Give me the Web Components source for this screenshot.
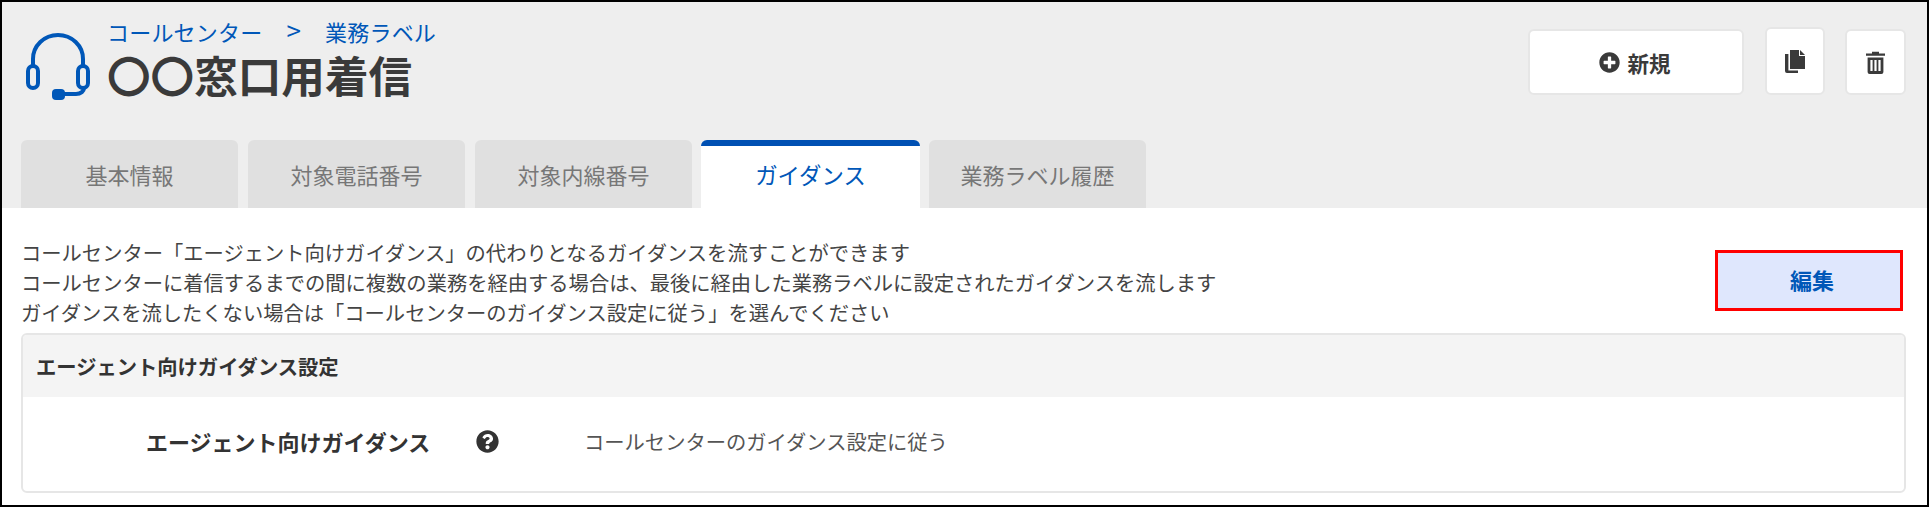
<!DOCTYPE html>
<html lang="ja">
<head>
<meta charset="utf-8">
<title>ガイダンス</title>
<style>
html,body{margin:0;padding:0;background:#fff}
body{font-family:"Noto Sans CJK JP","Noto Sans",sans-serif;color:#333}
</style>
</head>
<body>
<app-frame>
  <page-header slot="header" trail-a="コールセンター" trail-b="業務ラベル" heading="〇〇窓口用着信"></page-header>
  <tab-bar slot="header">
    <tab-item>基本情報</tab-item>
    <tab-item>対象電話番号</tab-item>
    <tab-item>対象内線番号</tab-item>
    <tab-item active>ガイダンス</tab-item>
    <tab-item>業務ラベル履歴</tab-item>
  </tab-bar>
  <guidance-intro>
    <div>コールセンター「エージェント向けガイダンス」の代わりとなるガイダンスを流すことができます</div>
    <div>コールセンターに着信するまでの間に複数の業務を経由する場合は、最後に経由した業務ラベルに設定されたガイダンスを流します</div>
    <div>ガイダンスを流したくない場合は「コールセンターのガイダンス設定に従う」を選んでください</div>
  </guidance-intro>
  <setting-card heading="エージェント向けガイダンス設定">
    <setting-row label="エージェント向けガイダンス">コールセンターのガイダンス設定に従う</setting-row>
  </setting-card>
</app-frame>
<script>
function def(name, html, init){
  customElements.define(name, class extends HTMLElement{
    constructor(){super();this.attachShadow({mode:'open'}).innerHTML=html;}
    connectedCallback(){ if(init) init(this, this.shadowRoot); }
  });
}
def('app-frame',`<style>
:host{display:flex;flex-direction:column;box-sizing:border-box;width:1929px;height:507px;border:2px solid #000;background:#fff;overflow:hidden}
.head{background:#eee;height:206px;display:flex;flex-direction:column;flex:none}
.body{flex:1;display:flex;flex-direction:column;padding:29px 21px 12px 19px;min-height:0}
</style><div class="head"><slot name="header"></slot></div><div class="body"><slot></slot></div>`);

def('page-header',`<style>
:host{display:flex;justify-content:space-between;height:138px;box-sizing:border-box;padding:0 21px 0 24px}
.left{display:flex;align-items:flex-start;gap:17px}
svg.hs{display:block;margin-top:31px;flex:none}
.txt{padding-top:14px}
.crumb{display:flex;gap:24px;font-size:22px;line-height:30px;color:#0057b8;letter-spacing:.2px}
.crumb .sep{font-size:26px;line-height:28px}
h1{margin:2px 0 0;font-size:43.6px;line-height:52px;font-weight:700;color:#3a3a3a}
.actions{display:flex;align-items:flex-end;height:93px;gap:21px}
.actions action-button:last-child{margin-left:-1px}
</style>
<div class="left">
<svg class="hs" width="64" height="67" viewBox="0 0 64 67" fill="none" stroke="#0057b8" stroke-width="4" aria-hidden="true">
<path d="M7 32V26a25 24 0 0 1 50 0v6"/>
<rect x="2" y="33" width="10" height="22" rx="5"/>
<rect x="52" y="33" width="10" height="22" rx="5"/>
<path d="M37 61H50c5 0 8-3 8-6"/>
<rect x="26" y="56" width="13" height="11" rx="4" fill="#0057b8" stroke="none"/>
</svg>
<div class="txt"><div class="crumb"><span id="a"></span><span class="sep">&gt;</span><span id="b"></span></div><h1 id="h"></h1></div>
</div>
<div class="actions">
<action-button wide><svg slot="icon" width="21" height="21" viewBox="0 0 512 512" fill="#3a3a3a"><path d="M256 8C119 8 8 119 8 256s111 248 248 248 248-111 248-248S393 8 256 8zm144 276c0 6.6-5.4 12-12 12h-92v92c0 6.6-5.4 12-12 12h-56c-6.6 0-12-5.4-12-12v-92h-92c-6.6 0-12-5.4-12-12v-56c0-6.6 5.4-12 12-12h92v-92c0-6.6 5.4-12 12-12h56c6.6 0 12 5.4 12 12v92h92c6.6 0 12 5.4 12 12v56z"/></svg>新規</action-button>
<action-button tall><svg slot="icon" width="20" height="23" viewBox="0 0 20 23" fill="#3a3a3a"><path d="M5 0h9v6h6v13H5z"/><path d="M15 0l5 5h-5z"/><path d="M0 4h3.4v16.4H13V23H2a2 2 0 0 1-2-2z"/></svg></action-button>
<action-button><svg slot="icon" width="19" height="23" viewBox="0 0 19 23" fill="#3a3a3a"><path d="M0 2.6h6V.8h7v1.8h6v2.2H0z"/><path fill-rule="evenodd" d="M1.6 6.4h15.8V21a2 2 0 0 1-2 2H3.6a2 2 0 0 1-2-2zM4.4 9v11h2.2V9zm4 0v11h2.2V9zm4 0v11h2.2V9z"/></svg></action-button>
</div>`,(el,s)=>{
  s.getElementById('a').textContent=el.getAttribute('trail-a');
  s.getElementById('b').textContent=el.getAttribute('trail-b');
  s.getElementById('h').textContent=el.getAttribute('heading');
});

def('action-button',`<style>
:host{display:inline-flex;align-items:center;justify-content:center;gap:7px;box-sizing:border-box;width:61px;height:66px;background:#fff;border:2px solid #e6e6e6;border-radius:6px;font-size:21.5px;font-weight:700;color:#3a3a3a}
:host([wide]){width:216px;padding-right:2px}
:host([tall]){width:60px;height:68px}
::slotted(svg){display:block;flex:none}
</style><slot name="icon"></slot><slot></slot>`);

def('tab-bar',`<style>:host{display:flex;gap:10px;padding-left:19px;height:68px}</style><slot></slot>`);

def('tab-item',`<style>
:host{display:flex;align-items:center;justify-content:center;box-sizing:border-box;width:217px;height:68px;background:#e0e0e0;color:#777;border-radius:6px 6px 0 0;font-size:22px}
:host([active]){width:219px;margin:0 -1px;background:#fff;color:#0057b8;border-top:6px solid #0050b3;padding-bottom:6px;font-size:22.4px}
</style><slot></slot>`);

def('guidance-intro',`<style>
:host{display:flex;justify-content:space-between;align-items:flex-start;height:91px;margin-bottom:5px;flex:none}
.t{font-size:20.3px;line-height:30px;color:#444;white-space:nowrap}
button{all:unset;box-sizing:border-box;display:flex;align-items:center;justify-content:center;width:188px;height:61px;margin:13px 3px 0 0;padding:0 0 4px 6px;background:#dfe7fd;border:3px solid #f00;color:#0057b8;font-size:22px;font-weight:700;font-family:inherit}
</style><div class="t"><slot></slot></div><button type="button">編集</button>`);

def('setting-card',`<style>
:host{display:block;box-sizing:border-box;height:160px;border:2px solid #e6e6e6;border-radius:6px;overflow:hidden;background:#fff;flex:none}
.h{height:62px;background:#f4f4f4;display:flex;align-items:center;padding-left:13px;font-size:20.3px;font-weight:700;color:#333}
</style><div class="h" id="h"></div><slot></slot>`,(el,s)=>{s.getElementById('h').textContent=el.getAttribute('heading');});

def('setting-row',`<style>
:host{display:grid;grid-template-columns:330px 108px 1fr;align-items:center;box-sizing:border-box;height:94px;padding:0 0 6px 123px;font-size:20.3px;color:#555}
.l{font-size:22px;font-weight:700;color:#333;white-space:nowrap}
svg{display:block}
</style><div class="l" id="l"></div><svg width="23" height="23" viewBox="0 0 512 512" fill="#333" aria-hidden="true"><path d="M504 256c0 136.997-111.043 248-248 248S8 392.997 8 256C8 119.083 119.043 8 256 8s248 111.083 248 248zM262.655 90c-54.497 0-89.255 22.957-116.549 63.758-3.536 5.286-2.353 12.415 2.715 16.258l34.699 26.31c5.205 3.947 12.621 3.008 16.665-2.122 17.864-22.658 30.113-35.797 57.303-35.797 20.429 0 45.698 13.148 45.698 32.958 0 14.976-12.363 22.667-32.534 33.976C247.128 238.528 216 254.941 216 296v4c0 6.627 5.373 12 12 12h56c6.627 0 12-5.373 12-12v-1.333c0-28.462 83.186-29.647 83.186-106.667 0-58.002-60.165-102-116.531-102zM256 338c-25.365 0-46 20.635-46 46 0 25.364 20.635 46 46 46s46-20.636 46-46c0-25.365-20.635-46-46-46z"/></svg><div><slot></slot></div>`,(el,s)=>{s.getElementById('l').textContent=el.getAttribute('label');});
</script>
</body>
</html>
